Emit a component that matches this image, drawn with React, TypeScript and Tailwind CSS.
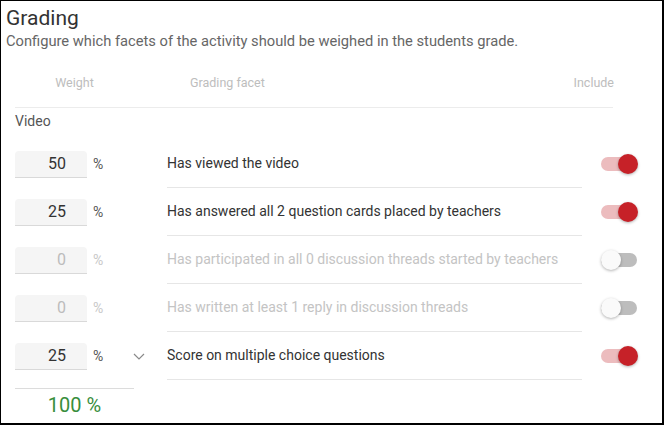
import React from 'react';

type Facet = {
  weight: number;
  label: string;
  enabled: boolean;
  expandable?: boolean;
};

const facets: Facet[] = [
  { weight: 50, label: 'Has viewed the video', enabled: true },
  { weight: 25, label: 'Has answered all 2 question cards placed by teachers', enabled: true },
  { weight: 0, label: 'Has participated in all 0 discussion threads started by teachers', enabled: false },
  { weight: 0, label: 'Has written at least 1 reply in discussion threads', enabled: false },
  { weight: 25, label: 'Score on multiple choice questions', enabled: true, expandable: true },
];

const Toggle = ({ on }: { on: boolean }) => (
  <div className="relative w-[37px] h-[20px] flex items-center">
    <div className={`w-[36px] h-[14px] rounded-full ${on ? 'bg-[#ecbcbe]' : 'bg-[#bdbdbd]'}`} />
    <div
      className={`absolute top-0 w-[20px] h-[20px] rounded-full shadow-[0_1px_3px_rgba(0,0,0,0.3)] ${
        on ? 'right-0 bg-[#c62128]' : 'left-0 bg-[#fafafa]'
      }`}
    />
  </div>
);

const ChevronDown = () => (
  <svg width="12" height="7" viewBox="0 0 12 7" fill="none">
    <path d="M1 1l5 5 5-5" stroke="#8a8a8a" strokeWidth="1.2" />
  </svg>
);

const FacetRow = ({ facet }: { facet: Facet }) => {
  const muted = !facet.enabled;
  return (
    <div className="flex items-center h-[48px]">
      <div className="flex items-center w-[152px] h-full">
        <div
          className={`w-[72px] h-[27px] flex items-center justify-end pr-[21px] bg-[#f5f5f5] rounded-t-[4px] border-b border-[#d9d9d9] text-[16px] ${
            muted ? 'text-[#bcbcbc]' : 'text-[#333]'
          }`}
        >
          {facet.weight}
        </div>
        <span className={`ml-[6px] text-[14px] ${muted ? 'text-[#c8c8c8]' : 'text-[#555]'}`}>%</span>
        {facet.expandable && (
          <span className="ml-[30px] flex items-center">
            <ChevronDown />
          </span>
        )}
      </div>
      <div
        className={`w-[415px] h-full flex items-center border-b border-[#e6e6e6] text-[14px] ${
          muted ? 'text-[#c4c4c4]' : 'text-[#333]'
        }`}
      >
        {facet.label}
      </div>
      <div className="ml-[19px]">
        <Toggle on={facet.enabled} />
      </div>
    </div>
  );
};

const App = () => {
  const total = facets.filter(f => f.enabled).reduce((sum, f) => sum + f.weight, 0);

  return (
    <div
      className="w-[664px] h-[425px] bg-white border-l border-t border-r-2 border-b-2 border-black overflow-hidden"
      style={{ fontFamily: 'Roboto, "Liberation Sans", sans-serif' }}
    >
      <div className="pl-[5px] pt-[5px]">
        <h1 className="text-[21px] leading-[24px] text-[#333]">Grading</h1>
        <p className="mt-[1px] text-[14.7px] leading-[20px] text-[#666]">
          Configure which facets of the activity should be weighed in the students grade.
        </p>
      </div>

      <div className="pl-[14px]">
        {/* header */}
        <div className="flex items-center w-[598px] pt-[22px] pb-[14px] border-b border-[#ececec] text-[12.5px] leading-[20px] text-[#bdbdbd]">
          <div className="w-[119px] text-center">Weight</div>
          <div className="ml-[56px]">Grading facet</div>
          <div className="ml-auto mr-[-1px]">Include</div>
        </div>

        <div className="pt-[3px] pb-[9px] text-[14px] leading-[20px] text-[#555]">Video</div>

        {facets.map(facet => (
          <FacetRow key={facet.label} facet={facet} />
        ))}

        <div className="mt-[8px] w-[119px] border-t border-[#dcdcdc] pt-[4px] text-center text-[20px] leading-[24px] text-[#388e3c]">
          {total} %
        </div>
      </div>
    </div>
  );
};

export default App;
